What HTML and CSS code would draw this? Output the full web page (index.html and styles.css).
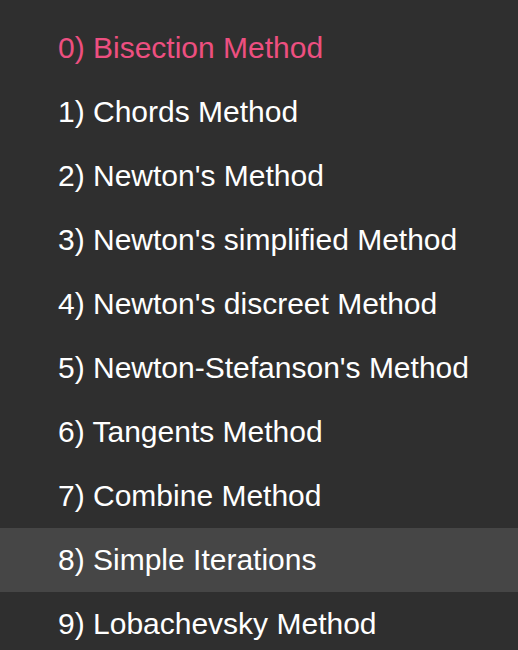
FILE: index.html
```html
<!DOCTYPE html>
<html lang="en">
<head>
<meta charset="utf-8">
<title>Methods</title>
<link rel="stylesheet" href="styles.css">
</head>
<body>
<ul class="menu">
  <li class="item active">0) Bisection Method</li>
  <li class="item">1) Chords Method</li>
  <li class="item">2) Newton's Method</li>
  <li class="item">3) Newton's simplified Method</li>
  <li class="item">4) Newton's discreet Method</li>
  <li class="item">5) Newton-Stefanson's Method</li>
  <li class="item">6) Tangents Method</li>
  <li class="item">7) Combine Method</li>
  <li class="item hover">8) Simple Iterations</li>
  <li class="item">9) Lobachevsky Method</li>
</ul>
</body>
</html>
```
FILE: styles.css
```css
html, body {
  margin: 0;
  padding: 0;
  background: #2f2f2f;
  height: 100%;
  overflow: hidden;
}
.menu {
  list-style: none;
  margin: 0;
  padding: 16px 0 0 0;
  font-family: "Liberation Sans", Arial, sans-serif;
  font-size: 30px;
}
.item {
  height: 64px;
  line-height: 63px;
  padding-left: 58px;
  color: #ffffff;
  white-space: nowrap;
}
.item.active {
  color: #ed4f80;
}
.item.hover {
  background: #464646;
}
```
